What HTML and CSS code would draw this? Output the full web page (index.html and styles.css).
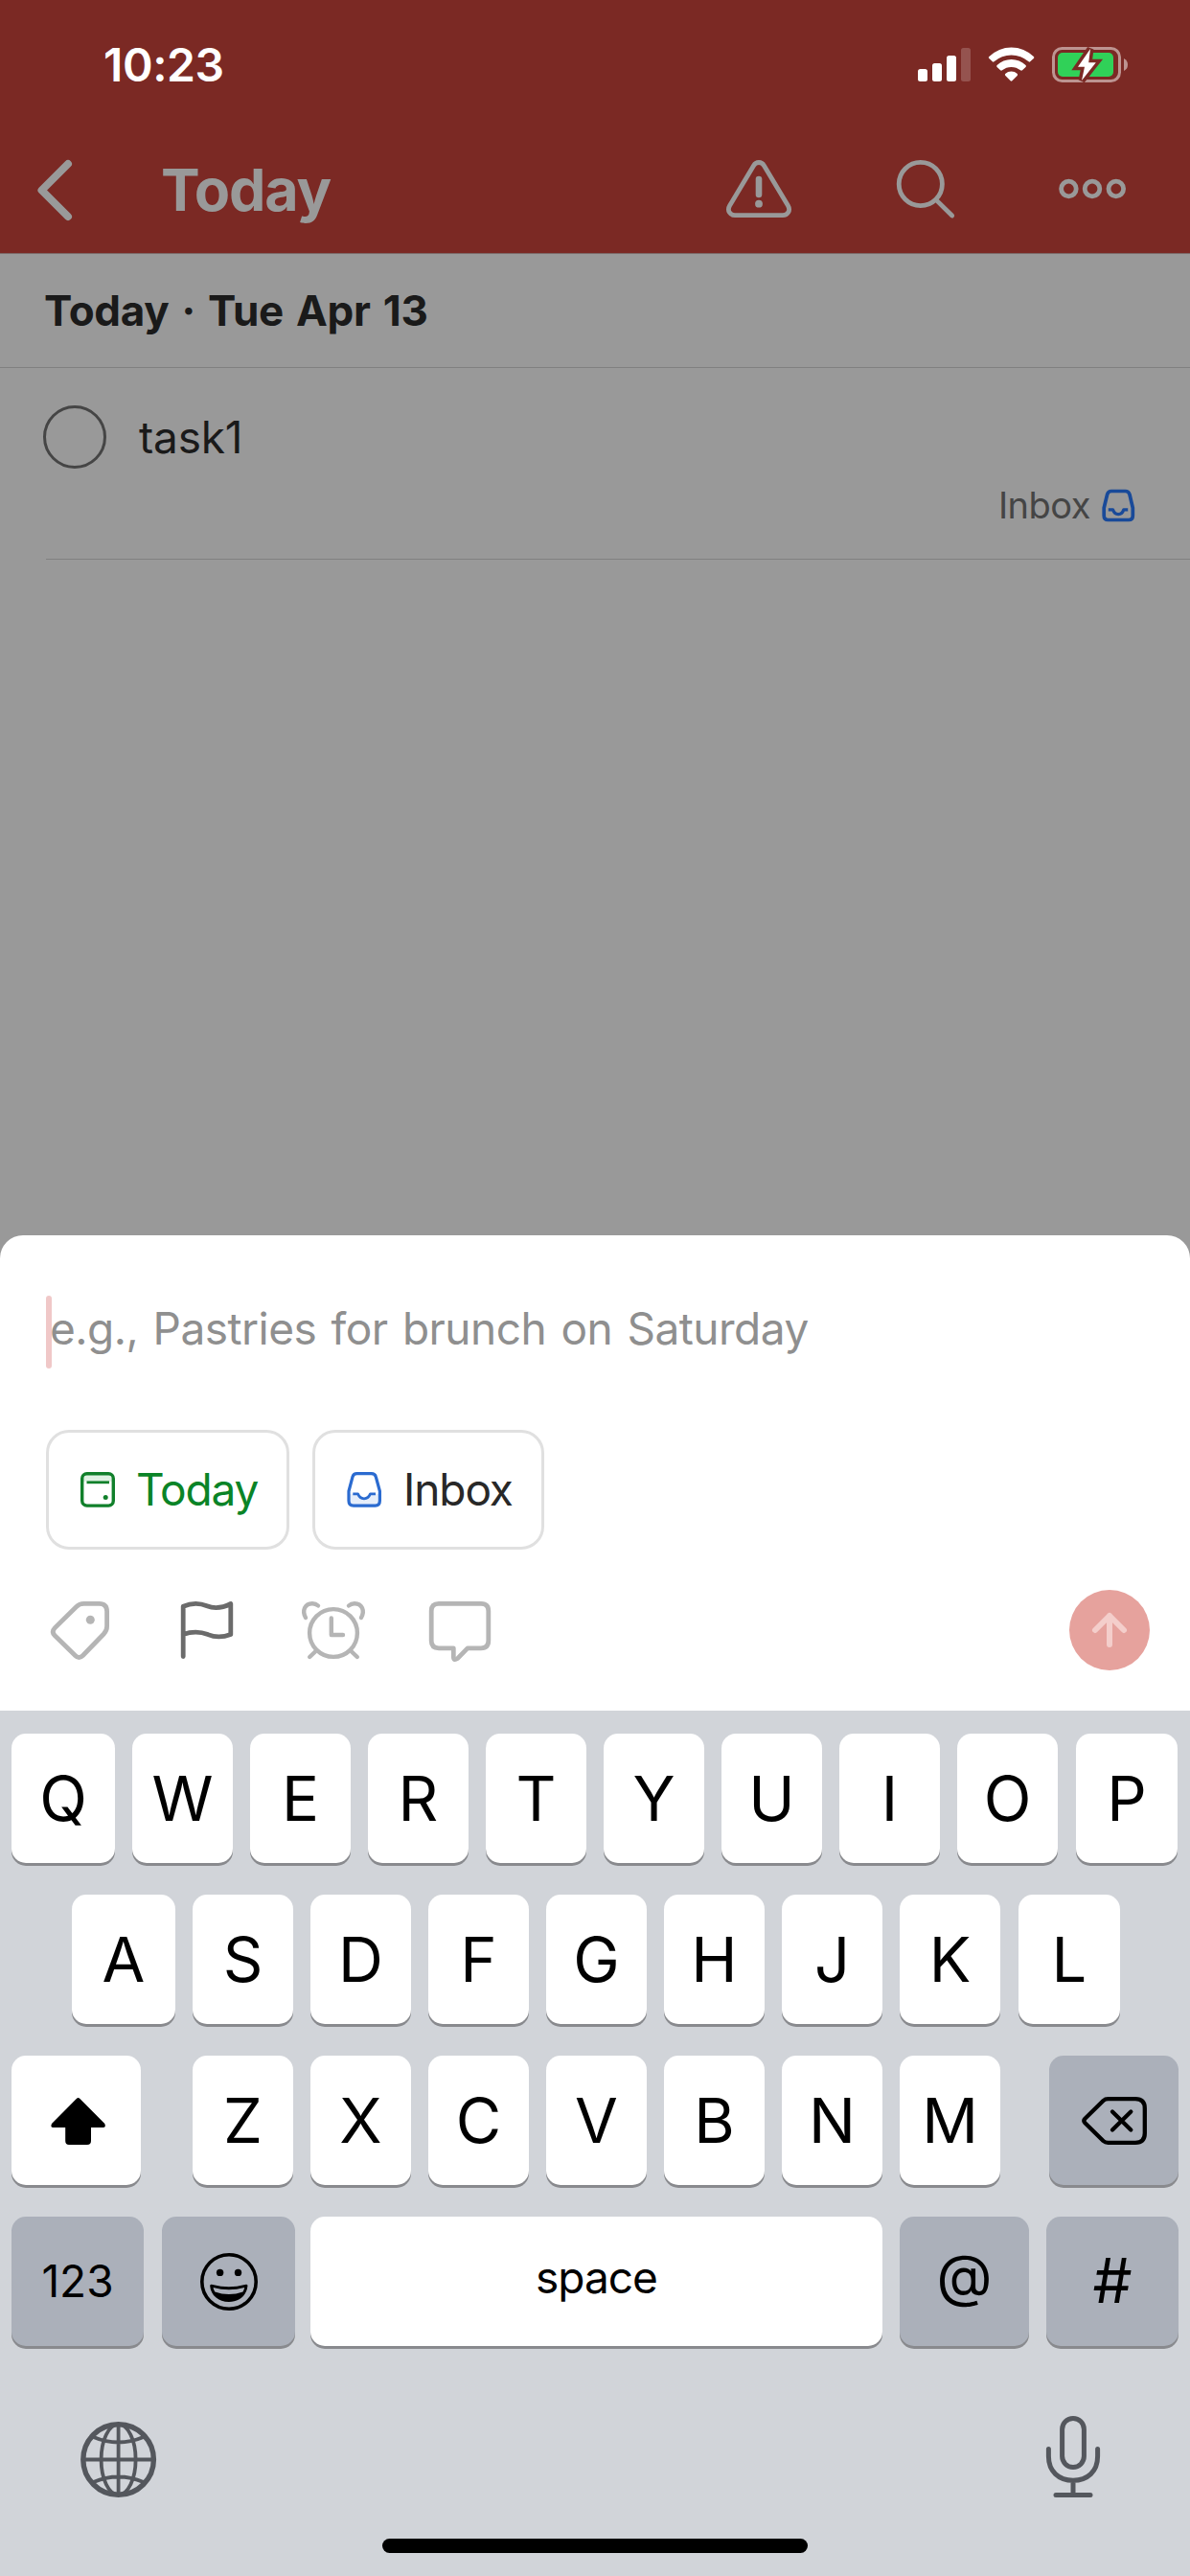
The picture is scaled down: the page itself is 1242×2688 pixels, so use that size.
FILE: index.html
```html
<!DOCTYPE html>
<html lang="en">
<head>
<meta charset="utf-8">
<title>Today</title>
<link rel="stylesheet" href="styles.css">
</head>
<body>
<div class="screen">
  <header class="top">
    <div class="status">
      <span class="clock">10:23</span>
      <svg class="status-icons" viewBox="950 40 240 56" width="240" height="56">
        <g fill="#fff">
          <rect x="958" y="72" width="10" height="13" rx="2.5"/>
          <rect x="973" y="66" width="10" height="19" rx="2.5"/>
          <rect x="988" y="58" width="10" height="27" rx="2.5"/>
          <rect x="1003" y="50" width="10" height="35" rx="2.5" opacity=".2"/>
          <path d="M1032.4 59 A33 33 0 0 1 1078.8 59 Q1079.8 60 1078.8 61 L1075.2 64.3 Q1074.5 65 1073.6 64.3 A27 27 0 0 0 1037.5 64.3 Q1036.6 65 1035.8 64.3 L1032.4 61 Q1031.2 60 1032.4 59Z"/>
          <path d="M1040.6 68 A21.5 21.5 0 0 1 1070.5 68 Q1071.5 69 1070.5 70 L1067 73.3 Q1066 74 1065 73.3 A15 15 0 0 0 1046 73.3 Q1045 74 1044.1 73.3 L1040.6 70 Q1039.6 69 1040.6 68Z"/>
          <path d="M1049.2 77 A9.5 9.5 0 0 1 1061.8 77 Q1062.5 78 1061.7 78.9 L1056.4 84.3 Q1055.5 85 1054.6 84.3 L1049.4 78.9 Q1048.4 78 1049.2 77Z"/>
        </g>
        <rect x="1099.5" y="50.5" width="69" height="34" rx="9" fill="none" stroke="#bd9491" stroke-width="3"/>
        <path d="M1173 61 Q1177 63 1177 67.5 T1173 74Z" fill="#bd9491"/>
        <rect x="1104" y="55" width="58" height="25" rx="5" fill="#30d158"/>
        <path d="M1138 51 L1125 69.7 H1132 L1129 84 L1143.8 65.3 H1136.2Z" fill="#fff" stroke="#7b2924" stroke-width="7" paint-order="stroke"/>
      </svg>
    </div>
    <nav class="nav">
      <svg class="back" viewBox="34 160 50 76" width="50" height="76"><path d="M71 171 L43.5 198.5 L71 226" fill="none" stroke="#999" stroke-width="8" stroke-linecap="round" stroke-linejoin="round"/></svg>
      <h1 class="title">Today</h1>
      <svg class="actions" viewBox="750 160 440 76" width="440" height="76" fill="none" stroke="#999" stroke-width="4.8">
        <path d="M786.6 172.8 C789 168.4 795 168.4 797.4 172.8 L822.4 214.6 C825.5 219.8 822 224.6 817 224.6 H767 C762 224.6 758.5 219.8 761.6 214.6Z"/>
        <path d="M792 187 V203" stroke-width="6.6" stroke-linecap="round"/>
        <circle cx="792" cy="212.7" r="3.9" fill="#999" stroke="none"/>
        <circle cx="960.8" cy="192" r="22.6"/>
        <path d="M977 208.6 L993.7 225" stroke-linecap="round"/>
        <circle cx="1115.4" cy="197" r="7.8"/><circle cx="1140" cy="197" r="7.8"/><circle cx="1164.8" cy="197" r="7.8"/>
      </svg>
    </nav>
  </header>

  <main class="list">
    <h2 class="section">Today · Tue Apr 13</h2>
    <article class="task">
      <div class="task-main">
        <span class="check"></span>
        <span class="task-name">task1</span>
      </div>
      <div class="task-project">
        <span>Inbox</span>
        <svg viewBox="1149 509 37 37" width="37" height="37" fill="none" stroke="#194a99" stroke-width="3.7" stroke-linejoin="round">
          <path d="M1160 512.5 H1174.5 Q1178 512.5 1179 516 L1182.3 530 V538 Q1182.3 542.5 1178 542.5 H1156.6 Q1152.2 542.5 1152.2 538 V530 L1155.6 516 Q1156.5 512.5 1160 512.5Z"/>
          <path d="M1156.8 531.8 H1161.5 Q1163 536.6 1167.2 536.6 T1172.8 531.8 H1177.2" stroke-width="3.2"/>
        </svg>
      </div>
    </article>
  </main>

  <section class="sheet">
    <div class="field"><span class="caret"></span><span class="placeholder">e.g., Pastries for brunch on Saturday</span></div>
    <div class="chips">
      <div class="chip chip-today">
        <svg viewBox="83 1535 38 39" width="38" height="39" fill="none" stroke="#11802b" stroke-width="3.4">
          <path d="M86 1546 V1541 Q87 1538 91 1538 H113 Q118 1538 118 1546Z" fill="#dff1e3" stroke="none"/>
          <rect x="85.7" y="1537.7" width="32.6" height="33.4" rx="5"/>
          <path d="M90.5 1546.8 H114" stroke-width="2.8"/>
          <circle cx="110.2" cy="1562.6" r="2.5" fill="#11802b" stroke="none"/>
        </svg>
        <span>Today</span>
      </div>
      <div class="chip chip-inbox">
        <svg viewBox="361 1535 38 39" width="38" height="39" fill="none" stroke="#2b6bd0" stroke-width="3.2" stroke-linejoin="round">
          <path d="M364 1559 H374 Q376 1564 380 1564 T386 1559 H396 V1571 H364Z" fill="#e6eefa" stroke="none"/>
          <path d="M372.5 1537.7 H387.5 Q391.5 1537.7 392.3 1541 L396.4 1556 V1566 Q396.4 1571.1 391.5 1571.1 H369 Q364 1571.1 364 1566 V1556 L368 1541 Q369 1537.7 372.5 1537.7Z"/>
          <path d="M368.3 1558.8 H373.5 Q375.5 1563.8 380 1563.8 T386.5 1558.8 H392" stroke-width="2.8"/>
        </svg>
        <span>Inbox</span>
      </div>
    </div>
    <div class="tools">
      <svg viewBox="48 1665 470 72" width="470" height="72" fill="none" stroke="#b5b5b5" stroke-width="4.8" stroke-linejoin="round">
        <path d="M87.5 1673.4 H103.5 Q111.6 1673.4 111.6 1681.5 V1697 Q111.6 1701.5 108.3 1705 L86.5 1727.5 Q82.4 1731.5 78.5 1727.5 L57.3 1706.8 Q53.3 1702.7 57.3 1698.6 L79.8 1676.5 Q82.8 1673.4 87.5 1673.4Z"/>
        <circle cx="94.3" cy="1690.3" r="4.5" fill="#b5b5b5" stroke="none"/>
        <g stroke="#6b6b6b" stroke-linecap="round">
          <path d="M191.2 1728.6 V1676.2 C200 1672.5 208 1672.5 216 1675.8 C224 1679 232 1678 240.8 1673.5 V1705.5 C233 1708.5 225 1709 217 1705.6 C209 1702.5 201 1702 191.2 1705.5"/>
        </g>
        <circle cx="348" cy="1704" r="24.9" stroke-width="4.4"/>
        <g stroke-linecap="round" stroke-width="4.4">
          <path d="M345.8 1688.5 V1706 H358"/>
          <path d="M329 1723.5 L323.2 1729 M367 1723.5 L372.8 1729"/>
          <path d="M319 1688 C315 1681 318 1673.2 326 1673.2 Q329.5 1673.2 332 1675.5 M377 1688 C381 1681 378 1673.2 370 1673.2 Q366.5 1673.2 364 1675.5"/>
        </g>
        <path d="M458 1673.3 H502 Q509.8 1673.3 509.8 1681 V1712 Q509.8 1719.8 502 1719.8 H488 L477.5 1730.6 Q473.3 1733.5 473.3 1728.5 V1719.8 H458 Q450.2 1719.8 450.2 1712 V1681 Q450.2 1673.3 458 1673.3Z"/>
      </svg>
      <span class="send"><svg viewBox="1138 1681 40 40" width="40" height="40" fill="none" stroke="#f4cecb" stroke-width="6" stroke-linecap="round" stroke-linejoin="round"><path d="M1158 1716 V1686 M1143 1701 L1158 1686 L1173 1701"/></svg></span>
    </div>
  </section>

  <section class="keyboard">
    <div class="row">
      <span class="key first">Q</span><span class="key">W</span><span class="key">E</span><span class="key">R</span><span class="key">T</span><span class="key">Y</span><span class="key">U</span><span class="key">I</span><span class="key">O</span><span class="key last">P</span>
    </div>
    <div class="row row-home">
      <span class="key first">A</span><span class="key">S</span><span class="key">D</span><span class="key">F</span><span class="key">G</span><span class="key">H</span><span class="key">J</span><span class="key">K</span><span class="key last">L</span>
    </div>
    <div class="row">
      <span class="key shift"><svg viewBox="50 2187 64 54" width="64" height="54"><path d="M80 2190.8 Q81.6 2189.4 83.2 2190.8 L109.3 2217 Q111 2221 107.5 2221 H95 V2235 Q95 2239 91 2239 H72 Q68.2 2239 68.2 2235 V2221 H55.5 Q52.2 2221 54 2217Z"/></svg></span>
      <span class="key">Z</span><span class="key">X</span><span class="key">C</span><span class="key">V</span><span class="key">B</span><span class="key">N</span><span class="key">M</span>
      <span class="key dark delete"><svg viewBox="1127 2187 72 54" width="72" height="54" fill="none" stroke="#000" stroke-width="4.3" stroke-linecap="round" stroke-linejoin="round"><path d="M1156.5 2191.2 H1185 Q1194.8 2191.2 1194.8 2201 V2227 Q1194.8 2236.8 1185 2236.8 H1156.5 Q1153.5 2236.8 1151.5 2235 L1132.4 2216.2 Q1130.3 2214 1132.4 2211.8 L1151.5 2193 Q1153.5 2191.2 1156.5 2191.2Z"/><path d="M1161 2204.5 L1180.3 2223.5 M1180.3 2204.5 L1161 2223.5"/></svg></span>
    </div>
    <div class="row">
      <span class="key dark numbers">123</span>
      <span class="key dark emoji"><svg viewBox="206 2349 64 64" width="64" height="64"><circle cx="238" cy="2381" r="28.2" fill="none" stroke="#000" stroke-width="3.6"/><circle cx="228.6" cy="2371.4" r="3.7"/><circle cx="247.5" cy="2371.4" r="3.7"/><path d="M218.2 2385.5 Q218 2383.2 221 2384 Q238 2388.5 254.5 2384 Q257.8 2383.2 257.4 2385.5 C256.5 2395 249 2402 238 2402 C227 2402 219 2395 218.2 2385.5Z"/><path d="M221.5 2387 Q238 2391.5 254.2 2387 Q253.8 2389.5 252.5 2391.5 Q238 2396.5 223.3 2391.5 Q222 2389.5 221.5 2387Z" fill="#abb0ba"/></svg></span>
      <span class="key space">space</span>
      <span class="key dark at">@</span>
      <span class="key dark hash">#</span>
    </div>
    <div class="bottom">
      <svg viewBox="82 2525 83 84" width="83" height="84" fill="none" stroke="#54575d" stroke-width="3.8"><circle cx="123.6" cy="2566.5" r="36.8" stroke-width="5.4"/><ellipse cx="123.6" cy="2566.5" rx="18" ry="36.8"/><path d="M123.6 2530 V2603 M87 2566.5 H160 M97.5 2543 Q123.6 2554 149.7 2543 M97.5 2590 Q123.6 2579 149.7 2590"/></svg>
      <svg viewBox="1088 2517 64 92" width="64" height="92" fill="none" stroke="#54575d" stroke-width="5" stroke-linecap="round"><rect x="1108.6" y="2523.5" width="22.8" height="51" rx="11.4"/><path d="M1094.4 2555.5 V2563 C1094.4 2579 1105 2588.3 1120 2588.3 S1145.6 2579 1145.6 2563 V2555.5 M1120 2589 V2603 M1102 2603.5 H1138"/></svg>
    </div>
    <div class="home"></div>
  </section>
</div>
</body>
</html>
```
FILE: styles.css
```css
* { box-sizing: border-box; margin: 0; padding: 0; }
body { background: #999; font-family: Inter, "Liberation Sans", sans-serif; font-optical-sizing: none; }
svg { display: block; flex: none; }
.screen { width: 1242px; height: 2688px; display: flex; flex-direction: column; overflow: hidden; background: #999; }

.top { height: 264px; background: #7b2924; }
.status { height: 136px; padding: 0 52px 0 108px; display: flex; align-items: center; justify-content: space-between; }
.clock { color: #fff; font-size: 48px; font-weight: 600; line-height: 136px; letter-spacing: -0.4px; }
.nav { height: 124px; padding: 0 52px 0 34px; display: flex; align-items: center; }
.title { margin-left: 84px; font-size: 61px; font-weight: 700; color: #999; line-height: 124px; letter-spacing: -1.2px; }
.actions { margin-left: auto; }

.list { height: 1025px; border-top: 1px solid #7d6a69; }
.section { height: 119px; padding-left: 46px; font-size: 44px; font-weight: 700; line-height: 119px; color: #1a1a1a; border-bottom: 1px solid #808080; letter-spacing: -0.3px; word-spacing: 3px; }
.task { height: 200px; margin-left: 48px; border-bottom: 1px solid #808080; }
.task-main { height: 144px; margin-left: -3px; display: flex; align-items: center; }
.check { width: 66px; height: 66px; border: 3px solid #454545; border-radius: 50%; }
.task-name { margin-left: 34px; font-size: 46px; line-height: 144px; color: #1a1a1a; letter-spacing: -0.2px; }
.task-project { padding-right: 56px; display: flex; justify-content: flex-end; align-items: center; gap: 11px; font-size: 38px; line-height: 37px; letter-spacing: -0.5px; color: #454545; margin-top: -19px; }

.sheet { height: 496px; padding: 63px 42px 0 48px; background: #fff; border-radius: 24px 24px 0 0; }
.field { height: 76px; display: flex; align-items: center; }
.caret { width: 6px; height: 76px; border-radius: 3px; background: #f0c8c8; }
.placeholder { margin-left: -2px; font-size: 46px; line-height: 70px; padding-bottom: 8px; color: #8f8f8f; letter-spacing: -0.5px; word-spacing: 2.8px; white-space: nowrap; }
.chips { margin-top: 64px; display: flex; gap: 24px; }
.chip { height: 125px; border: 3px solid #e0e0e0; border-radius: 24px; display: flex; align-items: center; padding-left: 32px; font-size: 46px; letter-spacing: -1.1px; }
.chip span { padding-bottom: 2px; }
.chip-today { width: 254px; color: #0a8427; gap: 21px; }
.chip-inbox { width: 242px; color: #282828; gap: 22px; }
.tools { margin-top: 42px; height: 84px; display: flex; align-items: center; justify-content: space-between; }
.send { width: 84px; height: 84px; border-radius: 50%; background: #e6a29d; display: flex; align-items: center; justify-content: center; }

.keyboard { height: 903px; padding: 24px 12px 0; background: #d1d4d9; display: flex; flex-direction: column; }
.row { display: flex; gap: 18px; height: 135px; margin-bottom: 33px; flex: none; }
.row-home { padding-left: 63px; }
.key { width: 105px; height: 135px; flex: none; display: flex; align-items: center; justify-content: center; background: #fff; border-radius: 15px; box-shadow: 0 3px 0 #898a8e; font-size: 65px; color: #000; }
.first { width: 108px; }
.last { width: 106px; margin-left: 1px; }
.dark { background: #abb0ba; }
.shift { width: 135px; margin-right: 36px; padding-left: 5px; }
.delete { width: 135px; margin-left: 33px; }
.numbers { width: 138px; font-size: 46px; padding-bottom: 2px; }
.emoji { width: 139px; margin-left: 1px; margin-right: -2px; }
.space { width: 597px; font-size: 46px; padding-bottom: 9px; letter-spacing: -1px; }
.at { width: 135px; font-size: 60px; padding-bottom: 14px; }
.hash { width: 138px; padding-bottom: 2px; }
.bottom { height: 92px; margin-top: 36px; padding: 0 78px 0 70px; display: flex; align-items: flex-end; justify-content: space-between; }
.home { width: 444px; height: 15px; margin: 40px auto 0; border-radius: 8px; background: #000; flex: none; }
```
